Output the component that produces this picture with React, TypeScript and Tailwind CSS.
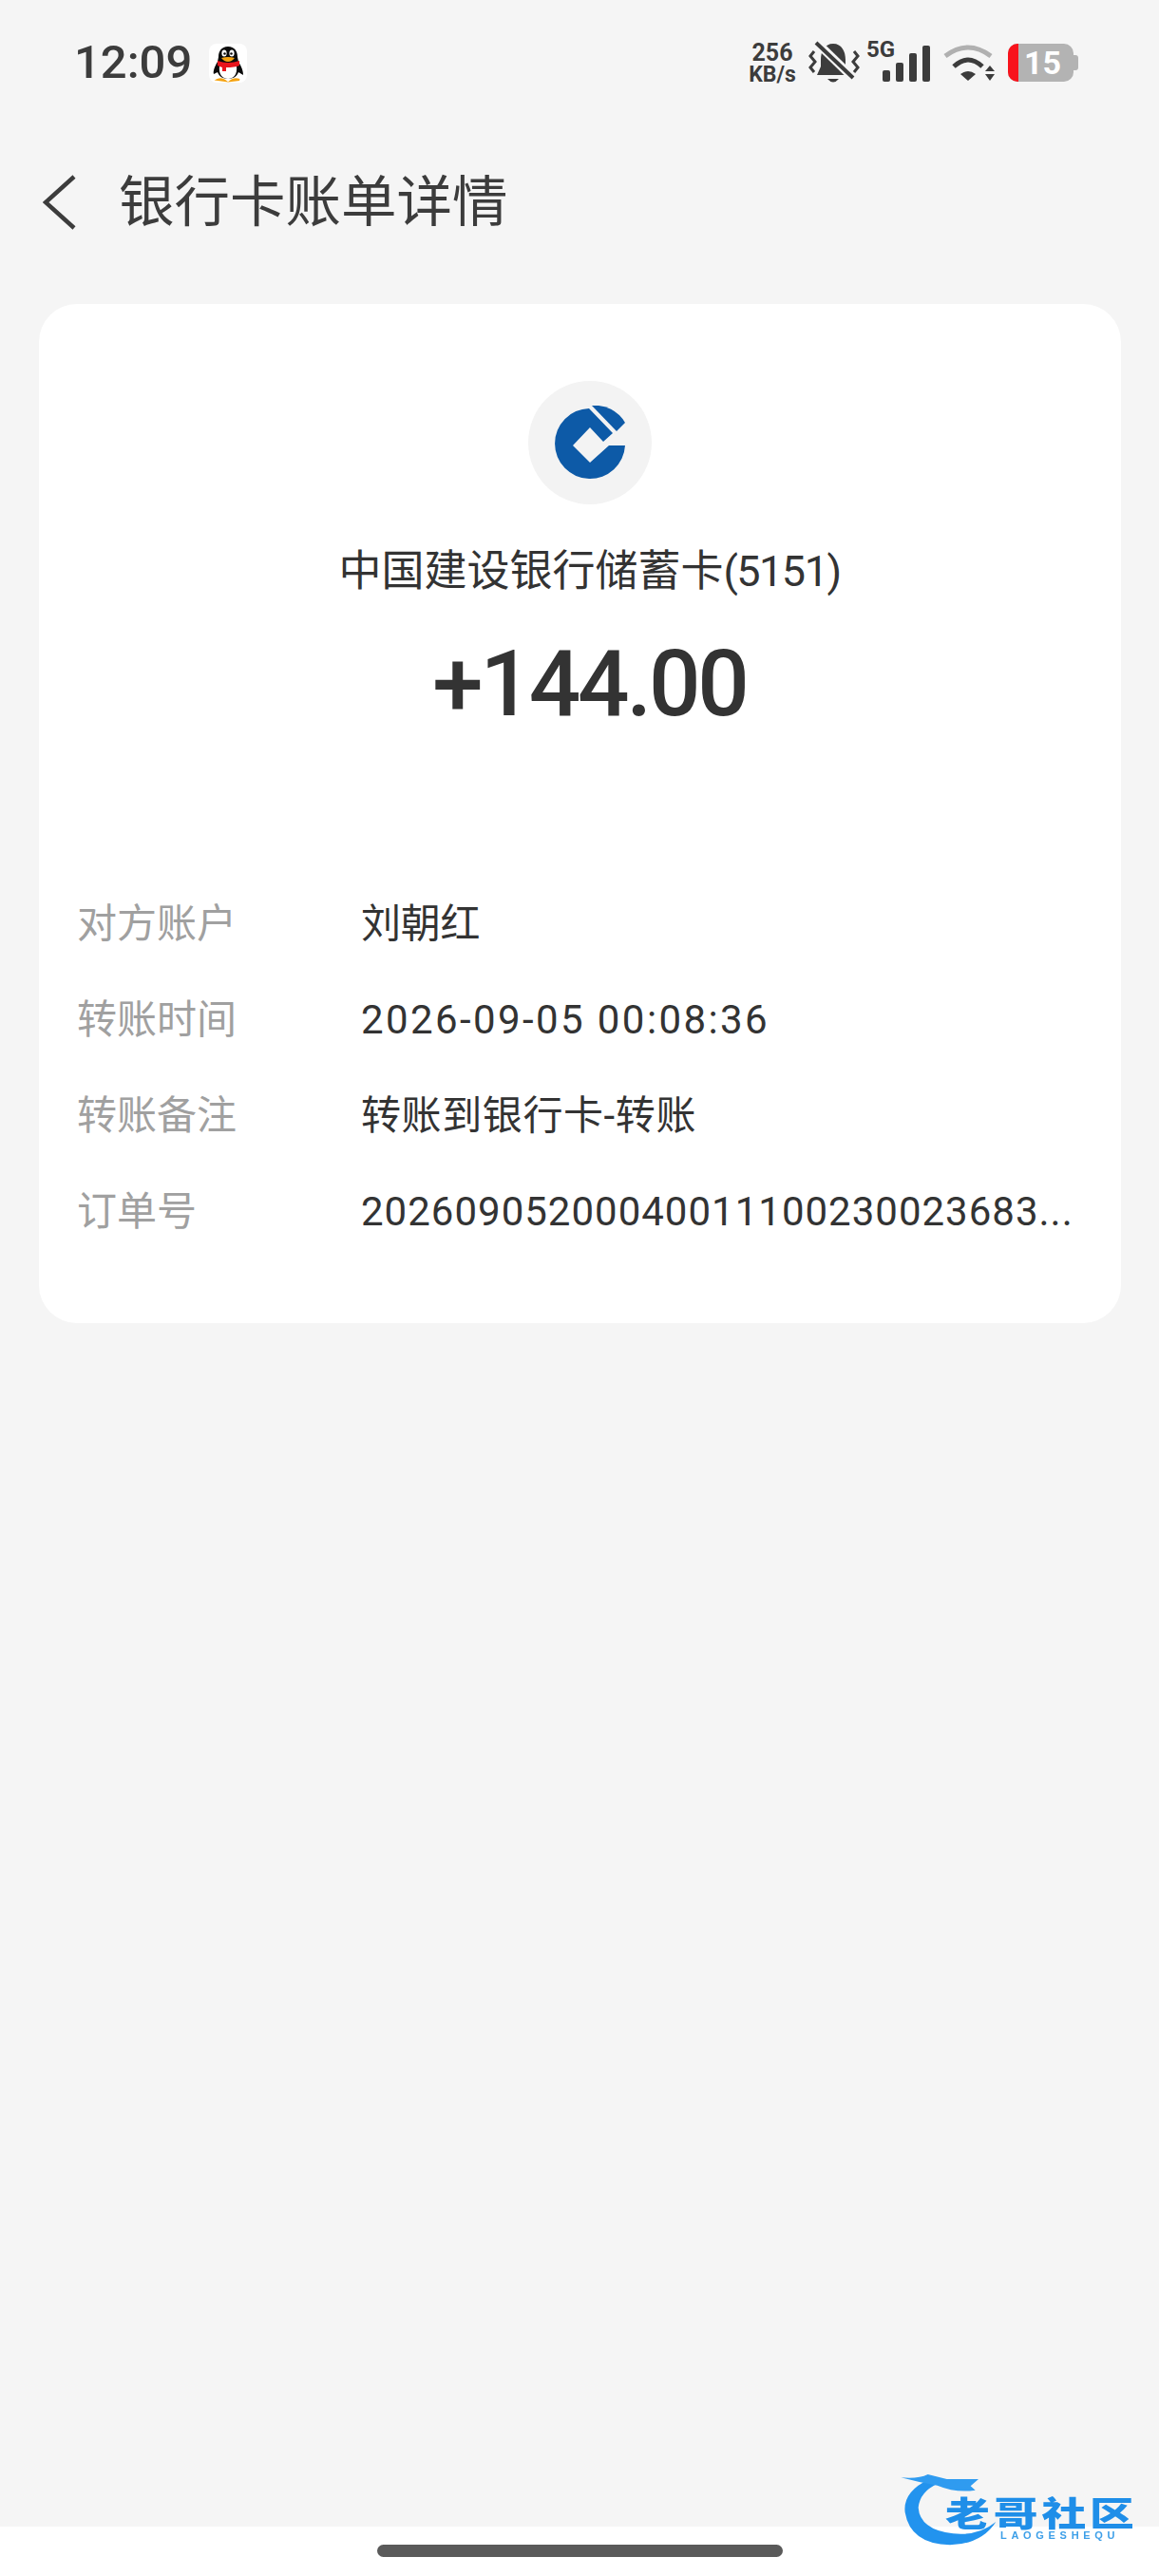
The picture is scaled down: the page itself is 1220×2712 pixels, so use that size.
const rows = [
  { label: "对方账户", value: "刘朝红", valueClass: "tracking-[-0.3px]" },
  { label: "转账时间", value: "2026-09-05 00:08:36", valueClass: "tracking-[2.4px]" },
  { label: "转账备注", value: "转账到银行卡-转账", valueClass: "tracking-[0.6px]" },
  { label: "订单号", value: "20260905200040011100230023683...", valueClass: "tracking-[1px]" },
];

function QQIcon() {
  return (
    <svg width="40" height="41" viewBox="0 0 40 41" className="rounded-[8px] bg-white">
      <path d="M20 3C13 3 10 8 10 14L9 19C6 24 4 29 5 32L9 30C11 35 15 37 20 37C25 37 29 35 31 30L36 33C36 28 34 24 31 19L30 14C30 8 27 3 20 3Z" fill="#0b0b0b" />
      <path d="M11 24C10 32 14 37 20 37C26 37 30 32 29 24Z" fill="#fff" />
      <ellipse cx="16" cy="10" rx="2.6" ry="3.6" fill="#fff" />
      <ellipse cx="24" cy="10" rx="2.6" ry="3.6" fill="#fff" />
      <circle cx="16.5" cy="10.5" r="1.3" fill="#111" />
      <circle cx="23.5" cy="10.5" r="1.3" fill="#111" />
      <path d="M13 15Q20 13 27 15Q24 19 20 19Q16 19 13 15Z" fill="#f5a311" />
      <path d="M9 18Q20 22 32 18L32 23Q27 25 18 25L18 29L14 29L14 25Q11 24 9 23Z" fill="#e8141c" />
      <path d="M9 38Q13 36 17 39ZM23 39Q27 36 32 38Z" fill="#f5a311" stroke="#f5a311" strokeWidth="2" />
    </svg>
  );
}

function BellMuted() {
  return (
    <svg width="54" height="46" viewBox="0 0 54 46">
      <path d="M26 3C17 3 13 11 13 20L13 27L9 36L43 36L39 27L39 20C39 11 35 3 26 3Z" fill="#3c3c3c" />
      <path d="M20 40Q26 47 32 40Z" fill="#3c3c3c" />
      <path d="M8 1L47 39" stroke="#f5f5f5" strokeWidth="9" />
      <path d="M8 2L47 39" stroke="#3c3c3c" strokeWidth="4" />
      <polyline points="6,11 2,16 7,22 2,28 6,33" fill="none" stroke="#3c3c3c" strokeWidth="3" />
      <polyline points="48,11 52,16 47,22 52,28 48,33" fill="none" stroke="#3c3c3c" strokeWidth="3" />
    </svg>
  );
}

function Signal() {
  return (
    <div className="relative flex h-[40px] items-end gap-[6px]">
      <span className="absolute left-[-17px] top-[-6px] font-['Roboto'] text-[24px] font-bold leading-[24px] text-[#3c3c3c]">5G</span>
      <div className="h-[12px] w-[8px] rounded-[2px] bg-[#3c3c3c]" />
      <div className="h-[20px] w-[8px] rounded-[2px] bg-[#3c3c3c]" />
      <div className="h-[30px] w-[8px] rounded-[2px] bg-[#3c3c3c]" />
      <div className="h-[38px] w-[8px] rounded-[2px] bg-[#3c3c3c]" />
    </div>
  );
}

function Wifi() {
  return (
    <svg width="54" height="39" viewBox="0 0 54 39">
      <path d="M2 12Q26 -6 50 12" fill="none" stroke="#b0b0b0" strokeWidth="5" />
      <path d="M11 23Q26 9 41 23" fill="none" stroke="#3c3c3c" strokeWidth="5" />
      <path d="M18 31Q26 25 34 31L26 38Z" fill="#3c3c3c" />
      <path d="M44 28L49 22L54 28Z" fill="#3c3c3c" />
      <path d="M44 31L54 31L49 38Z" fill="#3c3c3c" />
    </svg>
  );
}

function Battery() {
  return (
    <div className="flex items-center">
      <div className="flex h-[40px] w-[69px] overflow-hidden rounded-[10px] bg-[#b3b3b3]">
        <div className="h-full w-[11px] bg-[#f8131c]" />
        <span className="ml-[6px] font-['Roboto'] text-[34px] font-bold leading-[40px] text-white">15</span>
      </div>
      <div className="h-[16px] w-[5px] rounded-r-[3px] bg-[#b3b3b3]" />
    </div>
  );
}

function CcbLogo() {
  return (
    <svg width="74" height="78" viewBox="0 0 74 78">
      <path d="M36 3L61 29L51 38L37 23L19 42L37 60L57 42L74 42A37 37 0 1 1 36 3Z" fill="#0d5aa7" />
      <path d="M39 0A37 38 0 0 1 74 18L65 27Z" fill="#0d5aa7" />
    </svg>
  );
}

function Watermark() {
  return (
    <div className="absolute bottom-0 right-0 h-[132px] w-[320px] blur-[0.5px]">
      <svg width="320" height="132" viewBox="0 0 960 396" className="absolute left-0 top-0">
        <path d="M235 90Q150 130 158 195Q175 295 300 298Q400 295 445 225Q390 270 310 262Q205 250 200 180Q205 130 260 105Z" fill="#2293ee" />
        <path d="M145 85Q200 90 230 75L290 90L390 90L365 112L380 125Q320 135 260 110Q200 100 145 85Z" fill="#2f9bf0" />
      </svg>
      <span className="absolute left-[95px] top-[44px] origin-left scale-x-[1.3] whitespace-nowrap font-['Noto_Sans_CJK_SC',sans-serif] text-[36px] font-black leading-[40px] tracking-[3px] text-[#1f8ee8]">老哥社区</span>
      <span className="absolute left-[153px] top-[84px] whitespace-nowrap font-['Liberation_Sans',sans-serif] text-[11px] font-bold leading-[10px] tracking-[4.7px] text-[#3d9fe8]">LAOGESHEQU</span>
    </div>
  );
}

export default function App() {
  return (
    <div className="relative flex h-[2712px] w-[1220px] flex-col overflow-hidden bg-[#f5f5f5] font-['Roboto','Noto_Sans_CJK_SC',sans-serif] text-[#333333]">
      {/* 状态栏 */}
      <div className="mt-[40px] flex h-[52px] items-center justify-between pl-[78px] pr-[85px]">
        <div className="flex items-center gap-[18px]">
          <span className="text-[49px] font-medium leading-[52px] text-[#3c3c3c]">12:09</span>
          <QQIcon />
        </div>
        <div className="flex items-center">
          <div className="flex w-[54px] flex-col items-center font-bold text-[#3c3c3c]">
            <span className="text-[25px] leading-[25px]">256</span>
            <span className="text-[23px] leading-[22px]">KB/s</span>
          </div>
          <div className="ml-[11px]">
            <BellMuted />
          </div>
          <div className="ml-[24px]">
            <Signal />
          </div>
          <div className="ml-[14px]">
            <Wifi />
          </div>
          <div className="ml-[14px]">
            <Battery />
          </div>
        </div>
      </div>

      {/* 标题栏 */}
      <div className="mt-[71px] flex h-[100px] items-center pl-[45px]">
        <svg width="36" height="58" viewBox="0 0 36 58" fill="none" stroke="#3c3c3c" strokeWidth="4.5">
          <path d="M33 2L3 29L33 56" />
        </svg>
        <h1 className="ml-[44px] text-[58.5px] font-normal leading-[70px] text-[#3c3c3c]">银行卡账单详情</h1>
      </div>

      {/* 账单卡片 */}
      <div className="ml-[41px] mt-[57px] w-[1139px] rounded-[40px] bg-white pb-[67px] pt-[81px]">
        <div className="flex flex-col items-center pl-[20px]">
          <div className="flex h-[130px] w-[130px] items-center justify-center rounded-full bg-[#f3f3f3]">
            <CcbLogo />
          </div>
          <div className="mt-[43px] text-[45px] leading-[56px]">
            中国建设银行储蓄卡<span className="tracking-[-1.5px]">(5151)</span>
          </div>
          <div className="mt-[34px] text-[96px] font-medium leading-[112px] tracking-[-3.2px]">+144.00</div>
        </div>
        <div className="mt-[146px] flex flex-col px-[40px]">
          {rows.map((row) => (
            <div key={row.label} className="flex h-[101px] items-center text-[42px]">
              <div className="w-[299px] text-[#a0a0a0]">{row.label}</div>
              <div className={`whitespace-nowrap ${row.valueClass}`}>{row.value}</div>
            </div>
          ))}
        </div>
      </div>

      {/* 底部导航条 */}
      <div className="mt-auto flex h-[52px] justify-center bg-white pt-[19px]">
        <div className="h-[13px] w-[427px] rounded-full bg-[#5a5a5a]" />
      </div>

      <Watermark />
    </div>
  );
}
